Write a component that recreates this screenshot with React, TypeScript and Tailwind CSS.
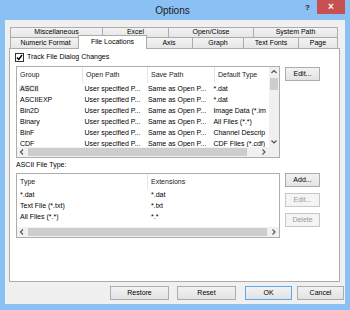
import React from 'react';

type Tab = { label: string; w: string; selected?: boolean };

const topTabs: Tab[] = [
  { label: 'Miscellaneous', w: 'w-[92px]' },
  { label: 'Excel', w: 'w-[66px]' },
  { label: 'Open/Close', w: 'w-[85px]' },
  { label: 'System Path', w: 'w-[85px]' },
];

const bottomTabs: Tab[] = [
  { label: 'Numeric Format', w: 'w-[70px]' },
  { label: 'File Locations', w: 'w-[69px]', selected: true },
  { label: 'Axis', w: 'w-[47px]' },
  { label: 'Graph', w: 'w-[51px]' },
  { label: 'Text Fonts', w: 'w-[55px]' },
  { label: 'Page', w: 'w-[40px]' },
];

const locations = [
  ['ASCII', '*.dat'],
  ['ASCIIEXP', '*.dat'],
  ['Bin2D', 'Image Data (*.im'],
  ['Binary', 'All Files (*.*)'],
  ['BinF', 'Channel Descrip'],
  ['CDF', 'CDF Files (*.cdf)'],
];

const fileTypes = [
  ['*.dat', '*.dat'],
  ['Text File (*.txt)', '*.txt'],
  ['All Files (*.*)', '*.*'],
];

const Chevron = ({ dir }: { dir: 'up' | 'down' | 'left' | 'right' }) => {
  const pts = {
    up: '0.5,4 3,1.5 5.5,4',
    down: '0.5,1.5 3,4 5.5,1.5',
    left: '4,0.5 1.5,3 4,5.5',
    right: '1.5,0.5 4,3 1.5,5.5',
  }[dir];
  return (
    <svg width="6" height="6" viewBox="0 0 6 6">
      <polyline points={pts} fill="none" stroke="#505050" strokeWidth="1.1" />
    </svg>
  );
};

const HScroll = ({ thumb }: { thumb: string }) => (
  <div className="flex h-[10px] w-full shrink-0 bg-[#f0f0f0]">
    <div className="flex w-[10px] items-center justify-center">
      <Chevron dir="left" />
    </div>
    <div className="flex flex-1 items-stretch py-[1px] pl-[1px]">
      <div className={`${thumb} bg-[#cdcdcd]`} />
    </div>
    <div className="flex w-[10px] items-center justify-center">
      <Chevron dir="right" />
    </div>
  </div>
);

const Button = ({ label, w, disabled, def }: { label: string; w: string; disabled?: boolean; def?: boolean }) => (
  <div
    className={`flex h-[14px] ${w} items-center justify-center border text-[7px] ${
      disabled
        ? 'border-[#c5c8ca] bg-[#f4f4f4] text-[#9a9a9a]'
        : def
        ? 'border-[#5ea6ec] bg-linear-to-b from-[#f2f2f2] to-[#e3e3e3] text-black'
        : 'border-[#acacac] bg-linear-to-b from-[#f2f2f2] to-[#e3e3e3] text-black'
    }`}
  >
    {label}
  </div>
);

const TabRow = ({ tabs, h }: { tabs: Tab[]; h: string }) => (
  <div className={`flex ${h}`}>
    {tabs.map((t, i) =>
      t.selected ? (
        <div
          key={t.label}
          className={`relative z-10 -mx-[2px] -mt-[2px] -mb-px flex h-[14px] ${t.w} items-center justify-center border-x border-t border-[#acacac] bg-white text-[7px]`}
        >
          {t.label}
        </div>
      ) : (
        <div
          key={t.label}
          className={`flex h-full ${t.w} items-center justify-center border-l border-t border-[#acacac] bg-linear-to-b from-[#f3f3f3] to-[#e6e6e6] text-[7px] ${
            i === tabs.length - 1 ? 'border-r' : ''
          }`}
        >
          {t.label}
        </div>
      )
    )}
  </div>
);

export default function App() {
  return (
    <div className="flex h-[310px] w-[350px] flex-col bg-[#8bc0f4] font-['Liberation_Sans',Arial,sans-serif] text-black">
      {/* title bar */}
      <div className="flex h-[20px]">
        <div className="flex-1" />
        <div className="flex items-center text-[10px] text-[#1a1a1a]">Options</div>
        <div className="flex flex-1 items-start justify-end pr-[5px]">
          <div className="mr-[7px] mt-[2px] text-[8px] font-bold text-[#222]">?</div>
          <div className="flex h-[14px] w-[28px] items-center justify-center bg-[#c75050] text-[10px] font-bold leading-none text-white">
            ×
          </div>
        </div>
      </div>

      {/* client */}
      <div className="mx-[5px] flex h-[284px] w-[340px] flex-col bg-[#f0f0f0] pl-[4px] pt-[7px]">
        <div className="pl-[1px]">
          <TabRow tabs={topTabs} h="h-[10px]" />
          <TabRow tabs={bottomTabs} h="h-[11px]" />
        </div>

        <div className="flex h-[234px] w-[331px] flex-col border border-[#acacac] bg-white pl-[6px] pt-[4px]">
          <div className="-ml-px flex h-[9px] items-center gap-[3px]">
            <div className="flex h-[9px] w-[9px] items-center justify-center border border-[#333] bg-white">
              <svg width="7" height="7" viewBox="0 0 7 7">
                <polyline points="1,3.5 2.8,5.5 6,1" fill="none" stroke="#000" strokeWidth="1.4" />
              </svg>
            </div>
            <span className="text-[7px]">Track File Dialog Changes</span>
          </div>

          {/* file locations list */}
          <div className="mt-[4px] flex">
            <div className="flex h-[92px] w-[264px] flex-col border border-[#adadad] bg-white">
              <div className="flex min-h-0 flex-1">
                <div className="flex-1 overflow-hidden text-[7px]">
                  <div className="flex h-[16px] items-center whitespace-nowrap text-[#222]">
                    <div className="h-full w-[66px] border-r border-[#e5e5e5] pl-[3px] leading-[16px]">Group</div>
                    <div className="h-full w-[65px] border-r border-[#e5e5e5] pl-[3px] leading-[16px]">Open Path</div>
                    <div className="h-full w-[67px] border-r border-[#e5e5e5] pl-[3px] leading-[16px]">Save Path</div>
                    <div className="h-full flex-1 pl-[3px] leading-[16px]">Default Type</div>
                  </div>
                  {locations.map(([g, d], i) => (
                    <div key={g} className="flex h-[11px] items-center whitespace-nowrap leading-[11px]">
                      <div className="w-[66px] overflow-hidden pl-[2px]">
                        <span className={`px-[1px] ${i === 0 ? 'bg-[#ececec]' : ''}`}>{g}</span>
                      </div>
                      <div className="w-[65px] overflow-hidden pl-[3px]">User specified P...</div>
                      <div className="w-[67px] overflow-hidden pl-[3px]">Same as Open P...</div>
                      <div className="w-[60px] overflow-hidden pl-[3px]">{d}</div>
                    </div>
                  ))}
                </div>
                <div className="flex w-[10px] flex-col bg-[#f0f0f0]">
                  <div className="flex h-[10px] items-center justify-center">
                    <Chevron dir="up" />
                  </div>
                  <div className="mx-[1px] mt-[1px] h-[12px] bg-[#cdcdcd]" />
                  <div className="flex-1" />
                  <div className="flex h-[10px] items-center justify-center">
                    <Chevron dir="down" />
                  </div>
                </div>
              </div>
              <div className="flex">
                <div className="flex-1">
                  <HScroll thumb="w-[219px]" />
                </div>
                <div className="h-[10px] w-[10px] bg-[#f0f0f0]" />
              </div>
            </div>
            <div className="ml-[5px] mt-[1px]">
              <Button label="Edit..." w="w-[35px]" />
            </div>
          </div>

          <div className="mt-[1px] flex h-[12px] items-center text-[7px]">ASCII File Type:</div>

          {/* file type list */}
          <div className="mt-[2px] flex">
            <div className="flex h-[65px] w-[264px] flex-col border border-[#adadad] bg-white">
              <div className="min-h-0 flex-1 overflow-hidden text-[7px]">
                <div className="flex h-[15px] whitespace-nowrap text-[#222]">
                  <div className="h-full w-[131px] border-r border-[#e5e5e5] pl-[3px] leading-[15px]">Type</div>
                  <div className="h-full flex-1 pl-[3px] leading-[15px]">Extensions</div>
                </div>
                {fileTypes.map(([t, e]) => (
                  <div key={t} className="flex h-[11px] items-center whitespace-nowrap leading-[11px]">
                    <div className="w-[131px] pl-[3px]">{t}</div>
                    <div className="flex-1 pl-[3px]">{e}</div>
                  </div>
                ))}
              </div>
              <HScroll thumb="w-[239px]" />
            </div>
            <div className="ml-[5px] flex flex-col gap-[6px]">
              <Button label="Add..." w="w-[35px]" />
              <Button label="Edit..." w="w-[35px]" disabled />
              <Button label="Delete" w="w-[35px]" disabled />
            </div>
          </div>
        </div>

        {/* dialog buttons */}
        <div className="mt-[4px] flex pl-[101px]">
          <Button label="Restore" w="w-[59px]" />
          <div className="ml-[8px]">
            <Button label="Reset" w="w-[59px]" />
          </div>
          <div className="ml-[9px]">
            <Button label="OK" w="w-[47px]" def />
          </div>
          <div className="ml-[5px]">
            <Button label="Cancel" w="w-[47px]" />
          </div>
        </div>
      </div>
    </div>
  );
}
